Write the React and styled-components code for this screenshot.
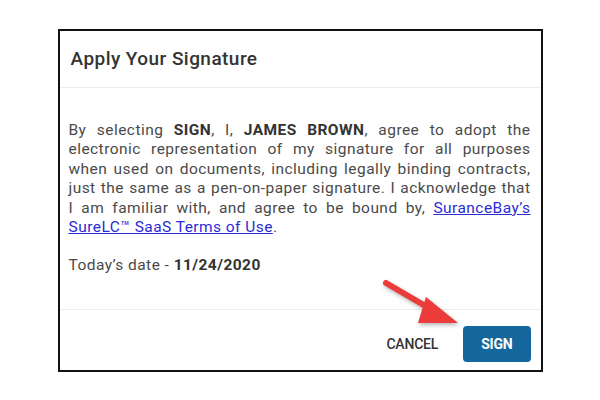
import React from 'react';
import styled, { createGlobalStyle } from 'styled-components';

const GlobalStyle = createGlobalStyle`
  html, body {
    margin: 0;
    padding: 0;
    background: #fff;
  }
  body {
    font-family: Roboto, 'Liberation Sans', Arial, sans-serif;
  }
`;

const Page = styled.div`
  width: 600px;
  height: 400px;
  display: flex;
  align-items: center;
  justify-content: center;
`;

const Dialog = styled.div`
  position: relative;
  width: 481px;
  height: 339px;
  border: 2px solid #111;
  background: #fff;
  display: flex;
  flex-direction: column;
`;

const Header = styled.div`
  height: 56px;
  display: flex;
  align-items: center;
  padding: 0 11px;
  border-bottom: 1px solid #ececec;
`;

const Title = styled.h2`
  margin: 0;
  font-size: 19px;
  font-weight: 500;
  color: #333;
  letter-spacing: 0.45px;
`;

const Body = styled.div`
  flex: 1;
  padding: 33px 10px 0 9px;
  color: #4a4a4a;
  font-size: 15.5px;
  line-height: 19.5px;
  letter-spacing: 0.45px;
`;

const Paragraph = styled.p`
  margin: 0 0 18px;
  text-align: justify;

  strong {
    color: #333;
    font-weight: 700;
  }
`;

const TermsLink = styled.a`
  color: #2b2bd6;
  text-decoration: underline;
`;

const Footer = styled.div`
  height: 61px;
  border-top: 1px solid #ececec;
  display: flex;
  justify-content: flex-end;
  align-items: flex-start;
  padding: 16px 10px 0 0;
  box-sizing: border-box;
  gap: 13px;
`;

const Button = styled.button`
  height: 36px;
  border: none;
  border-radius: 4px;
  font-family: Roboto, 'Liberation Sans', Arial, sans-serif;
  font-size: 14px;
  font-weight: ${(p) => (p.$primary ? 700 : 500)};
  text-transform: uppercase;
  cursor: pointer;
  padding: ${(p) => (p.$primary ? '0 18px' : '0 12px')};
  background: ${(p) => (p.$primary ? '#14679c' : 'transparent')};
  color: ${(p) => (p.$primary ? '#fff' : '#333')};
  letter-spacing: -0.2px;
`;

const ArrowMark = styled.svg`
  position: absolute;
  left: 318px;
  top: 242px;
  width: 90px;
  height: 60px;
  filter: drop-shadow(1px 2px 2px rgba(0, 0, 0, 0.3));
`;

const App = () => {
  return (
    <Page>
      <GlobalStyle />
      <Dialog>
        <Header>
          <Title>Apply Your Signature</Title>
        </Header>
        <Body>
          <Paragraph>
            By selecting <strong>SIGN</strong>, I, <strong>JAMES BROWN</strong>, agree to adopt the
            electronic representation of my signature for all purposes when used on documents,
            including legally binding contracts, just the same as a pen-on-paper signature. I
            acknowledge that I am familiar with, and agree to be bound by,{' '}
            <TermsLink href="#">SuranceBay’s SureLC™ SaaS Terms of Use</TermsLink>.
          </Paragraph>
          <Paragraph>
            Today’s date - <strong>11/24/2020</strong>
          </Paragraph>
        </Body>
        <Footer>
          <Button>Cancel</Button>
          <Button $primary>Sign</Button>
        </Footer>
        <ArrowMark viewBox="0 0 90 60">
          <line x1="8" y1="10" x2="56" y2="38" stroke="#ec3b3b" strokeWidth="6" strokeLinecap="round" />
          <polygon points="48,24 80,50 40,50" fill="#ec3b3b" />
        </ArrowMark>
      </Dialog>
    </Page>
  );
};

export default App;
